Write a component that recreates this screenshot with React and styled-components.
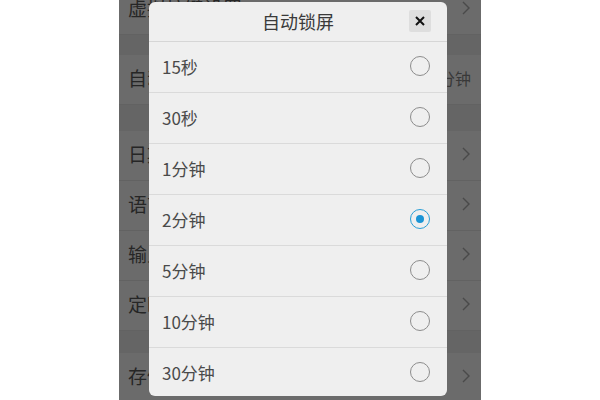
import React from 'react';
import styled, { createGlobalStyle } from 'styled-components';

const GlobalStyle = createGlobalStyle`
    html, body {
        margin: 0;
        padding: 0;
        background: #ffffff;
    }
    body {
        font-family: "Noto Sans CJK SC", "Noto Sans", sans-serif;
    }
`

const Page = styled.div`
    width: 600px;
    height: 400px;
    display: flex;
    justify-content: center;
    overflow: hidden;
`

const Phone = styled.div`
    position: relative;
    width: 362px;
    height: 415px;
    flex: none;
    background: #646464;
    overflow: hidden;
    display: flex;
    flex-direction: column;
    margin-top: -15px;
`

const SettingRow = styled.div`
    flex: none;
    height: 50px;
    box-sizing: border-box;
    display: flex;
    align-items: center;
    justify-content: space-between;
    padding: 0 10px 4px 9px;
    background: #6b6b6b;
    border-bottom: 1px solid #626262;
    color: #262626;
    font-size: 19px;
`

const SectionGap = styled.div`
    flex: none;
    height: ${props => props.size}px;
    background: #656565;
`

const RowRight = styled.div`
    display: flex;
    align-items: center;
    gap: 4px;
    color: #383838;
    font-size: 16px;
`

const Chevron = styled.svg`
    width: 10px;
    height: 16px;
`

const Dialog = styled.div`
    position: absolute;
    left: 30px;
    top: 17px;
    width: 298px;
    height: 394px;
    background: #efefef;
    border-radius: 6px;
    overflow: hidden;
    display: flex;
    flex-direction: column;
`

const DialogHeader = styled.div`
    flex: none;
    height: 40px;
    position: relative;
    display: flex;
    align-items: center;
    justify-content: center;
    padding-bottom: 2px;
    box-sizing: border-box;
    border-bottom: 1px solid #d6d6d6;
    color: #3a3a3a;
    font-size: 18px;
`

const CloseButton = styled.div`
    position: absolute;
    right: 16px;
    top: 8px;
    width: 22px;
    height: 22px;
    border-radius: 2px;
    background: #dedede;
    display: flex;
    align-items: center;
    justify-content: center;
`

const OptionRow = styled.div`
    flex: none;
    height: 51px;
    box-sizing: border-box;
    display: flex;
    align-items: center;
    justify-content: space-between;
    padding: 0 17px 2px 13px;
    border-bottom: 1px solid #dadada;
    color: #4a4a4a;
    font-size: 17px;
`

const Radio = styled.span`
    width: 18px;
    height: 18px;
    border-radius: 50%;
    border: 1.5px solid ${props => props.checked ? '#2a9fd6' : '#8c8c8c'};
    display: flex;
    align-items: center;
    justify-content: center;

    &::after {
        content: '';
        display: ${props => props.checked ? 'block' : 'none'};
        width: 8px;
        height: 8px;
        border-radius: 50%;
        background: #1b95d6;
    }
`

const settings = [
    { label: '虚拟按键设置', arrow: true },
    { gap: 20 },
    { label: '自动锁屏', value: '2分钟' },
    { gap: 26 },
    { label: '日期和时间', arrow: true },
    { label: '语言', arrow: true },
    { label: '输入法', arrow: true },
    { label: '定时开关机', arrow: true },
    { gap: 22 },
    { label: '存储', arrow: true }
]

const options = ['15秒', '30秒', '1分钟', '2分钟', '5分钟', '10分钟', '30分钟']

const ArrowIcon = () => (
    <Chevron viewBox="0 0 10 16">
        <path d="M2 2 L8 8 L2 14" fill="none" stroke="#4a4a4a" strokeWidth="1.4"/>
    </Chevron>
)

const App = () => {
    return (
        <Page>
            <GlobalStyle/>
            <Phone>
                {settings.map((item, i) => item.gap
                    ? <SectionGap key={i} size={item.gap}/>
                    : (
                        <SettingRow key={i}>
                            <span>{item.label}</span>
                            <RowRight>
                                {item.value && <span>{item.value}</span>}
                                {item.arrow && <ArrowIcon/>}
                            </RowRight>
                        </SettingRow>
                    )
                )}

                <Dialog>
                    <DialogHeader>
                        自动锁屏
                        <CloseButton>
                            <svg width="12" height="12" viewBox="0 0 12 12">
                                <path d="M2 2 L10 10 M10 2 L2 10" stroke="#111" strokeWidth="2"/>
                            </svg>
                        </CloseButton>
                    </DialogHeader>
                    {options.map(opt => (
                        <OptionRow key={opt}>
                            <span>{opt}</span>
                            <Radio checked={opt === '2分钟'}/>
                        </OptionRow>
                    ))}
                </Dialog>
            </Phone>
        </Page>
    )
}

export default App;
